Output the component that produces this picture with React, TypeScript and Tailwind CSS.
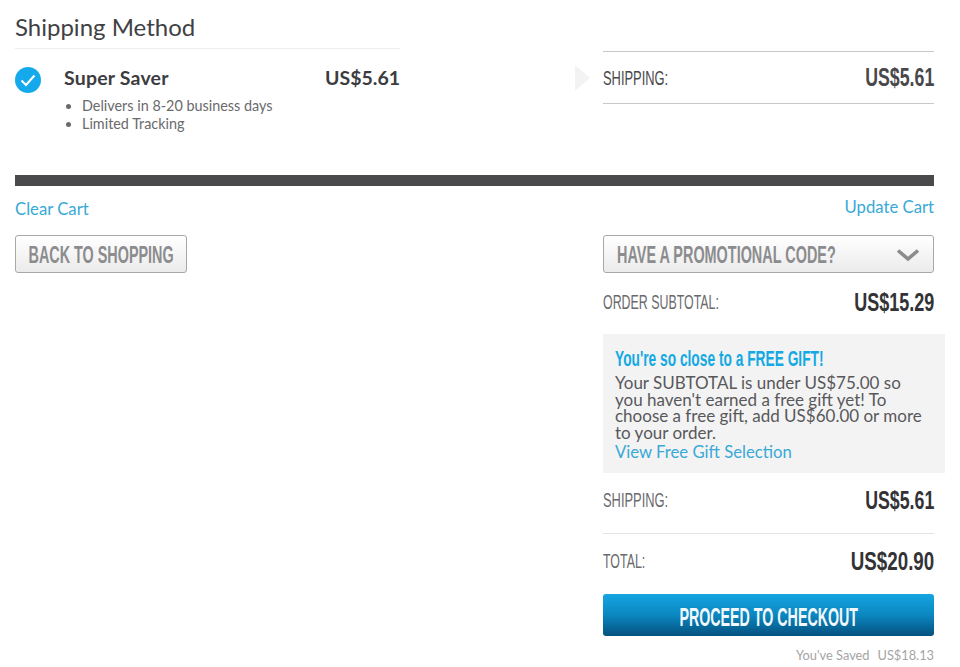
const cond = "font-['Liberation_Sans',sans-serif] whitespace-nowrap";

function SummaryRow({ label, amount, labelClass, amountClass }: { label: string; amount: string; labelClass: string; amountClass: string }) {
  return (
    <div className="flex items-center justify-between">
      <span className={`${cond} inline-block origin-left text-[21px] leading-6 text-[#6a6a6c] ${labelClass}`}>{label}</span>
      <span className={`${cond} inline-block origin-right text-[25px] font-bold leading-6 text-[#333336] ${amountClass}`}>{amount}</span>
    </div>
  );
}

export default function App() {
  return (
    <div className="h-[667px] w-[960px] overflow-hidden bg-white pl-[15px] pr-[26px] font-['Lato',sans-serif]">
      {/* Shipping method + summary line */}
      <div className="flex h-[175px] items-start">
        <div className="w-[385px]">
          <h2 className="h-[49px] border-b border-[#eeeeee] pt-[10px] text-[24px] leading-[34px] text-[#414144]">Shipping Method</h2>
          <div className="mt-[16px] flex">
            <svg width="26" height="26" viewBox="0 0 26 26" className="mt-[2px] shrink-0">
              <circle cx="13" cy="13" r="13" fill="#14a9ea" />
              <path d="M6.5 13.5l4.5 4.5 8.5-9.5" fill="none" stroke="#fff" strokeWidth="2" />
            </svg>
            <div className="ml-[23px] flex-1">
              <div className="flex items-center justify-between text-[19.5px] font-bold leading-[26px] text-[#3c3c3f]">
                <span className="tracking-[0.2px]">Super Saver</span>
                <span>US$5.61</span>
              </div>
              <ul className="mt-[6px] list-disc pl-[18px] text-[14.4px] leading-[18px] text-[#6a6a6c]">
                <li>Delivers in 8-20 business days</li>
                <li>Limited Tracking</li>
              </ul>
            </div>
          </div>
        </div>
        <div className="mt-[65px] ml-[175px] h-0 w-0 border-y-[13px] border-l-[15px] border-y-transparent border-l-[#f3f3f3]" />
        <div className="mt-[51px] ml-[13px] flex h-[53px] flex-1 items-center justify-between border-y border-[#c8c8c8]">
          <span className={`${cond} inline-block origin-left scale-x-[0.613] text-[21px] text-[#48484b]`}>SHIPPING:</span>
          <span className={`${cond} inline-block origin-right scale-x-[0.71] text-[25px] font-bold text-[#48484b]`}>US$5.61</span>
        </div>
      </div>

      <div className="h-[11px] bg-[#4a4a4d]" />

      {/* Cart actions */}
      <div className="flex items-start justify-between">
        <div>
          <a className="mt-[13px] block text-[16.7px] leading-[20px] text-[#39a9d6]">Clear Cart</a>
          <button className="mt-[16px] flex h-[38px] w-[172px] items-center justify-center rounded-[3px] border border-[#a8a8a8] bg-gradient-to-b from-white to-[#ebebeb] pt-[2px]">
            <span className={`${cond} inline-block shrink-0 scale-x-[0.625] text-[23px] font-bold text-[#8c8c8e]`}>BACK TO SHOPPING</span>
          </button>
        </div>

        <div className="w-[331px]">
          <a className="mt-[11px] block text-right text-[16.7px] leading-[20px] text-[#39a9d6]">Update Cart</a>
          <button className="mt-[18px] flex h-[38px] w-full items-center rounded-[3px] border border-[#a8a8a8] bg-gradient-to-b from-white to-[#ebebeb] pl-[13px] pr-[13px] pt-[2px]">
            <span className={`${cond} block w-0 flex-1 origin-left scale-x-[0.627] text-left text-[23px] font-bold text-[#8c8c8e]`}>HAVE A PROMOTIONAL CODE?</span>
            <svg width="24" height="14" viewBox="0 0 24 14" className="shrink-0">
              <path d="M2 2.5l10 8.5 10-8.5" fill="none" stroke="#8c8c8e" strokeWidth="3.6" />
            </svg>
          </button>
          <div className="mt-[17px]">
            <SummaryRow label="ORDER SUBTOTAL:" amount="US$15.29" labelClass="scale-x-[0.59]" amountClass="scale-x-[0.72]" />
          </div>
          <div className="mt-[20px] h-[139px] w-[342px] bg-[#f3f3f4] pl-[12px] pr-[22px] pt-[14px]">
            <div className={`${cond} origin-left scale-x-[0.625] text-[22px] font-bold leading-[22px] text-[#14a9e2]`}>You're so close to a FREE GIFT!</div>
            <p className="mt-[5px] text-[17px] leading-[16.5px] text-[#58585a]">
              Your SUBTOTAL is under US$75.00 so you haven't earned a free gift yet! To choose a free gift, add US$60.00 or more to your order.
            </p>
            <a className="mt-[1px] block text-[16.7px] leading-[20px] text-[#39a9d6]">View Free Gift Selection</a>
          </div>
          <div className="mt-[15px]">
            <SummaryRow label="SHIPPING:" amount="US$5.61" labelClass="scale-x-[0.613]" amountClass="scale-x-[0.71]" />
          </div>
          <div className="mt-[21px] border-t border-[#e4e4e4] pt-[15px]">
            <SummaryRow label="TOTAL:" amount="US$20.90" labelClass="scale-x-[0.59]" amountClass="scale-x-[0.75]" />
          </div>
          <button className="mt-[21px] flex h-[42px] w-full items-center justify-center rounded-[3px] bg-gradient-to-b from-[#14a5e2] via-[#0b87c0] to-[#05527f] pt-[5px]">
            <span className={`${cond} inline-block shrink-0 scale-x-[0.57] text-[25px] font-bold text-[#f2f8fb]`}>PROCEED TO CHECKOUT</span>
          </button>
          <div className="mt-[11px] flex justify-end gap-[8px] text-[12.8px] leading-[16px] text-[#a4a4a6]">
            <span>You've Saved</span>
            <span>US$18.13</span>
          </div>
        </div>
      </div>
    </div>
  );
}
